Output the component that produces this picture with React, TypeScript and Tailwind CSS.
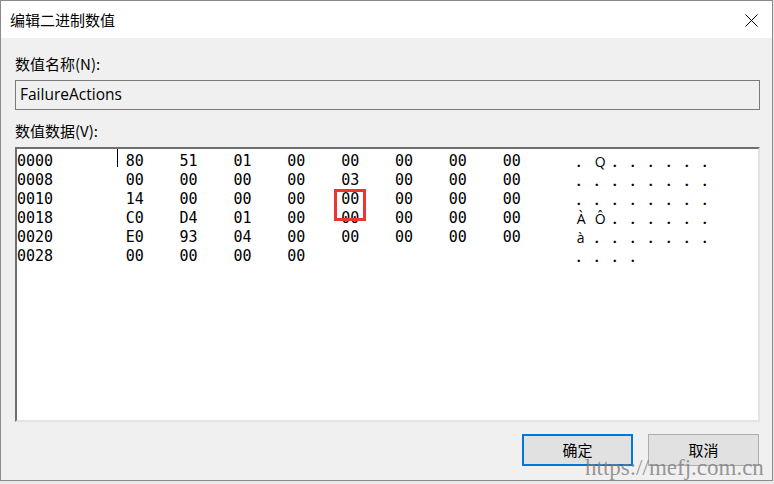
import React from "react";

const rows: { off: string; bytes: string[]; ascii: string[] }[] = [
  { off: "0000", bytes: ["80", "51", "01", "00", "00", "00", "00", "00"], ascii: [".", "Q", ".", ".", ".", ".", ".", "."] },
  { off: "0008", bytes: ["00", "00", "00", "00", "03", "00", "00", "00"], ascii: [".", ".", ".", ".", ".", ".", ".", "."] },
  { off: "0010", bytes: ["14", "00", "00", "00", "00", "00", "00", "00"], ascii: [".", ".", ".", ".", ".", ".", ".", "."] },
  { off: "0018", bytes: ["C0", "D4", "01", "00", "00", "00", "00", "00"], ascii: ["À", "Ô", ".", ".", ".", ".", ".", "."] },
  { off: "0020", bytes: ["E0", "93", "04", "00", "00", "00", "00", "00"], ascii: ["à", ".", ".", ".", ".", ".", ".", "."] },
  { off: "0028", bytes: ["00", "00", "00", "00"], ascii: [".", ".", ".", "."] },
];

const ui = "font-['Segoe_UI','Noto_Sans','Noto_Sans_CJK_SC',sans-serif]";

export default function App() {
  return (
    <div className="w-[774px] h-[484px] bg-[#e9e9e9] overflow-hidden">
      <div className={`relative w-[773px] h-[481px] border border-[#8a8a8a] bg-[#f0f0f0] flex flex-col ${ui} text-black`}>
        {/* Title bar */}
        <div className="h-[37px] bg-white flex items-center justify-between pl-[9px] pr-[14px]">
          <span className="text-[15px] leading-none font-['Noto_Sans_CJK_SC',sans-serif]">编辑二进制数值</span>
          <svg width="13" height="13" viewBox="0 0 13 13" className="mt-[1px]">
            <path d="M0.5 0.5 L12.5 12.5 M12.5 0.5 L0.5 12.5" stroke="#000" strokeWidth="1" fill="none" />
          </svg>
        </div>

        {/* Body */}
        <div className="flex-1 flex flex-col pl-[14px]">
          <div className="mt-[16px] h-[20px] flex items-center text-[15px] font-['Noto_Sans_CJK_SC',sans-serif]">数值名称(N):</div>
          <div className="mt-[6px] w-[745px] h-[30px] border border-[#7a7a7a] bg-[#f0f0f0] flex items-center pl-[4px] text-[15.5px] font-['Open_Sans',sans-serif]">
            FailureActions
          </div>
          <div className="mt-[11px] h-[20px] flex items-center text-[15px] font-['Noto_Sans_CJK_SC',sans-serif]">数值数据(V):</div>

          <div className="relative mt-[6px] w-[745px] h-[275px] bg-white border-t-2 border-l-2 border-t-[#6e6e6e] border-l-[#6e6e6e] border-r-2 border-b-2 border-r-[#e3e3e3] border-b-[#e3e3e3]">
            <div className="flex flex-col pt-[3px]">
              {rows.map((r, i) => (
                <div key={i} className="relative flex items-center h-[19px]">
                  <div className="w-[108.7px] font-['DejaVu_Sans_Mono',monospace] text-[15px] leading-none">{r.off}</div>
                  {i === 0 && <span className="absolute left-[99.5px] top-[-3px] w-[1px] h-[18px] bg-black" />}
                  <div className="flex w-[451px]">
                    {Array.from({ length: 8 }).map((_, j) => (
                      <div key={j} className="w-[53.86px] font-['DejaVu_Sans_Mono',monospace] text-[15px] leading-none">
                        {r.bytes[j] ?? ""}
                      </div>
                    ))}
                  </div>
                  <div className="flex">
                    {r.ascii.map((c, k) => (
                      <div key={k} className={`w-[18px] text-[14px] leading-none ${c === "." ? "font-bold" : ""} font-['Open_Sans',sans-serif]`}>
                        {c}
                      </div>
                    ))}
                  </div>
                </div>
              ))}
            </div>
            <div className="absolute left-[317px] top-[40px] w-[32px] h-[32px] border-[3px] border-[#ee3535]" />
          </div>

          <div className="mt-[12px] flex gap-[15px] pl-[507px]">
            <button className="w-[111px] h-[32px] bg-[#e1e1e1] border-2 border-[#0078d7] text-[15px] font-['Noto_Sans_CJK_SC',sans-serif] flex items-center justify-center">
              确定
            </button>
            <button className="w-[111px] h-[32px] bg-[#e1e1e1] border border-[#adadad] text-[15px] font-['Noto_Sans_CJK_SC',sans-serif] flex items-center justify-center">
              取消
            </button>
          </div>
        </div>

        <div className="absolute left-[584px] top-[455px] text-[23px] leading-none text-[#7d7d7d]/80 font-['Liberation_Serif',serif] pointer-events-none">
          https://mefj.com.cn
        </div>
      </div>
    </div>
  );
}
